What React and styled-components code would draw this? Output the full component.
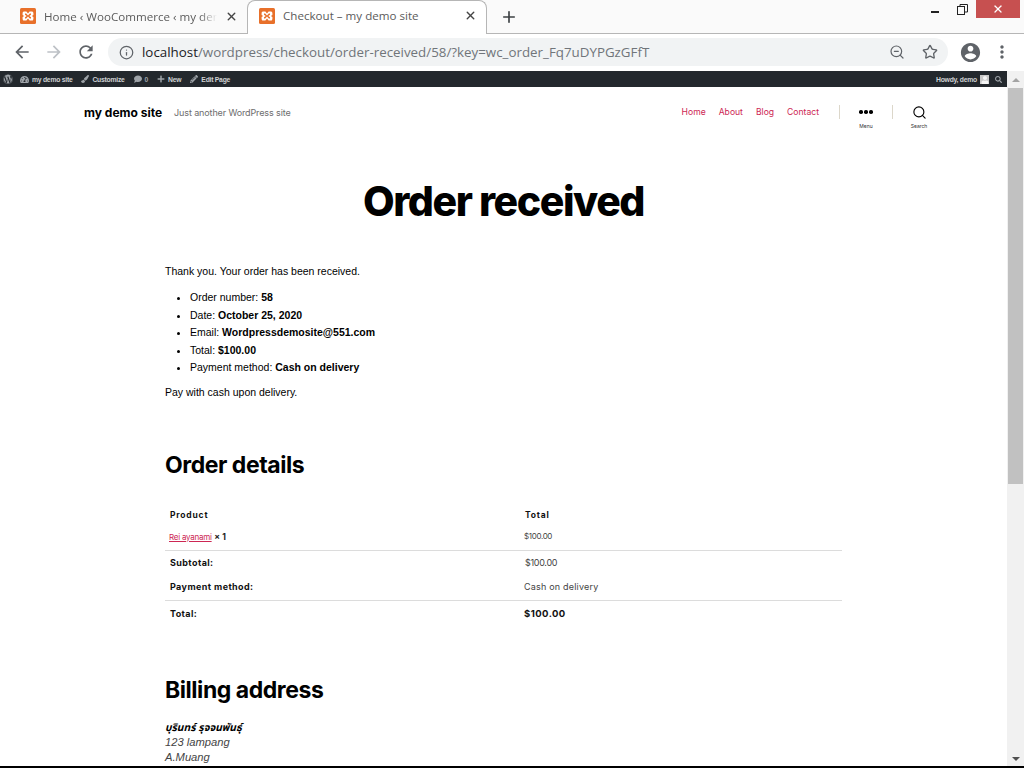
import React from "react";
import styled, { createGlobalStyle } from "styled-components";
import { Info, ZoomOut, Star, X, Plus, Search } from "lucide-react";
import { FaWordpress, FaTachometerAlt, FaPaintBrush, FaComment, FaPlus, FaPencilAlt, FaSearch, FaUser } from "react-icons/fa";

const Global = createGlobalStyle`
  html, body { margin: 0; padding: 0; height: 768px; overflow: hidden; background: #fff; }
  #root { height: 768px; }
  * { box-sizing: border-box; }
`;

const Shell = styled.div`
  width: 1024px; height: 768px; display: flex; flex-direction: column; overflow: hidden;
  border-bottom: 2px solid #000;
  font-family: "Liberation Sans", Arial, sans-serif;
`;
const TabStrip = styled.div`
  height: 34px; flex: none; display: flex; align-items: flex-end; background: #fafafa;
  border-bottom: 1px solid #b6b6b6; padding-left: 8px;
`;
const Tab = styled.div`
  width: ${p => p.$w}px; height: 34px; display: flex; align-items: center; gap: 8px;
  padding: 0 9px ${p => (p.$active ? 4 : 0)}px ${p => (p.$active ? 11 : 12)}px;
  margin-bottom: ${p => (p.$active ? -1 : 0)}px;
  background: ${p => (p.$active ? "#fff" : "transparent")};
  ${p => p.$active && "border: 1px solid #b6b6b6; border-bottom: none; border-radius: 8px 8px 0 0;"}
  font-family: "Open Sans", "Noto Sans", sans-serif; font-size: 11.6px; color: #5b5b5b;
`;
const TabTitle = styled.span`
  flex: 1; min-width: 0; overflow: hidden; white-space: nowrap;
  ${p => p.$fade && "-webkit-mask-image: linear-gradient(90deg,#000 90%,transparent);"}
`;
const NewTab = styled.div`
  width: 44px; height: 33px; display: flex; align-items: center; justify-content: center; color: #3c4043;
`;
const WindowControls = styled.div`
  margin-left: auto; align-self: flex-start; display: flex; align-items: flex-start; padding-right: 4px;
`;
const WinBtn = styled.div`
  width: ${p => p.$w}px; height: 18px; padding-right: ${p => p.$pr || 0}px; display: flex; align-items: center; justify-content: center;
  background: ${p => p.$bg || "transparent"}; color: ${p => p.$c || "#222"};
`;
const Toolbar = styled.div`
  height: 37px; flex: none; display: flex; align-items: flex-start; background: #fff; padding: 4px 0 0 6px;
`;
const NavIcon = styled.div`
  width: ${p => p.$w || 32}px; height: 28px; margin-left: ${p => p.$ml || 0}px; display: flex; align-items: center; justify-content: center;
  color: ${p => p.$c || "#5f6368"};
`;
const Omnibox = styled.div`
  width: 840px; height: 28px; margin-left: 6px; border-radius: 14px; background: #f1f3f4; display: flex; align-items: center;
  padding: 0 1px 0 11px; gap: 8px; color: #5f6368;
`;
const Url = styled.div`
  flex: 1; font-family: "Open Sans", "Noto Sans", sans-serif; font-size: 13.35px; color: #70757a; white-space: nowrap;
`;
const UrlHost = styled.span` color: #202124; `;
const Body = styled.div` flex: 1; min-height: 0; display: flex; `;
const Column = styled.div` width: 1007px; display: flex; flex-direction: column; overflow: hidden; background: #fff; `;
const AdminBar = styled.div`
  height: 16px; flex: none; background: #23282d; display: flex; align-items: center; padding: 0 5px 0 3px;
  color: #cfd1d3; font-size: 6.8px; letter-spacing: -.25px; font-weight: 700;
`;
const AdminItem = styled.div`
  display: flex; align-items: center; gap: 3px; margin-right: ${p => p.$mr ?? 9}px; white-space: nowrap;
  svg { color: #9ea3a8; }
`;
const Avatar = styled.div`
  width: 9px; height: 9px; background: #c8c8c8; display: flex; align-items: flex-end; justify-content: center; overflow: hidden;
`;
const Spacer = styled.div` flex: 1; `;
const CommentCount = styled.span` color: #9ea3a8; `;
const Scrollbar = styled.div`
  width: 17px; background: #f1f1f1; display: flex; flex-direction: column; align-items: center;
`;
const ScrollArrow = styled.div`
  width: 0; height: 0; margin: 7px 0 6px; border-left: 4px solid transparent; border-right: 4px solid transparent; border-bottom: 4px solid #a3a3a3;
`;
const Thumb = styled.div` width: 15px; height: 396px; background: #c1c1c1; `;
const ArrowDown = styled(ScrollArrow)` margin: auto 0 5px; border-bottom: none; border-top: 4px solid #505050; `;
const SiteHeader = styled.header`
  height: 50px; flex: none; display: flex; align-items: center; padding: 0 62px 0 84px; font-family: Inter, sans-serif;
`;
const SiteTitle = styled.div` font-size: 12px; font-weight: 700; color: #000; margin-right: 12px; `;
const Tagline = styled.div` font-size: 9px; color: #6d6d6d; letter-spacing: -.12px; `;
const NavList = styled.nav` margin-left: auto; display: flex; gap: 13px; font-size: 8.6px; color: #cd2653; margin-top: -1px; `;
const Divider = styled.div` width: 1px; height: 14px; background: #dcd7ca; margin-top: -1px; margin-left: ${p => p.$ml}px; `;
const HeaderToggle = styled.div`
  width: ${p => p.$w}px; display: flex; flex-direction: column; align-items: center; gap: 5px; padding-top: 11px;
  font-size: 5px; color: #333;
`;
const ToggleIcon = styled.div` height: 12px; display: flex; align-items: center; color: #000; `;
const Dots = styled.div`
  display: flex; gap: 1.5px;
  i { width: 3.5px; height: 3.5px; border-radius: 50%; background: #000; display: block; }
`;
const H1 = styled.h1`
  margin: 42px 0 0; height: 44px; flex: none; text-align: center; font-family: Inter, sans-serif; font-weight: 800; font-size: 41px;
  line-height: 44px; letter-spacing: -1.45px; color: #000;
`;
const Main = styled.main` margin: 40px 0 0 165px; width: 677px; `;
const Para = styled.p` margin: 0; font-size: 10.5px; line-height: 16px; color: #000; `;
const Overview = styled.ul` margin: 10px 0 7px; padding: 0 0 0 25px; font-size: 10.5px; line-height: 17.5px; color: #000; `;
const H2 = styled.h2`
  margin: ${p => p.$mt}px 0 0; font-family: Inter, sans-serif; font-weight: 700; font-size: 23px; line-height: 28px; letter-spacing: -.45px; color: #000;
`;
const Table = styled.table`
  width: 677px; margin-top: 25px; border-collapse: collapse; table-layout: fixed; font-family: Inter, sans-serif; font-size: 9px; color: #333;
`;
const Row = styled.tr`
  height: ${p => p.$h}px; ${p => p.$line && "border-bottom: 1px solid #dcdcdc;"}
`;
const HeadCell = styled.th`
  text-align: left; padding: 0 0 0 ${p => p.$pl}px; font-weight: 700; letter-spacing: .8px; color: #111; font-size: 8.5px; width: ${p => p.$w || "auto"};
`;
const Cell = styled.td`
  padding: 0 0 ${p => p.$pb || 0}px ${p => p.$pl ?? 4}px; letter-spacing: ${p => p.$ls ?? .2}px; font-size: ${p => p.$fs || 9}px; font-weight: ${p => p.$b ? 700 : 400}; color: ${p => p.$c || "#444"};
`;
const ProductLink = styled.a` color: #cd2653; text-decoration: underline; font-size: 8px; letter-spacing: -.25px; `;
const Qty = styled.strong` color: #222; font-size: 8.5px; letter-spacing: 0; `;
const Address = styled.address`
  margin-top: 16px; font-size: 11.2px; line-height: 15px; font-style: italic; color: #444;
`;
const Name = styled.div` color: #000; font-size: 10.3px; font-weight: 700; font-family: "Liberation Sans", "Noto Sans Thai", "Noto Sans", "DejaVu Sans", sans-serif; `;

const Xampp = () => (
  <svg width="16" height="16" viewBox="0 0 16 16" style={{ flex: "none" }}>
    <rect width="16" height="16" rx="1.5" fill="#e8702a" />
    <path d="M4 3.5h2.4L8 5.4l1.6-1.9H12c1 0 1.4 1 1.4 1.8V7l-1.5 1 1.5 1v1.7c0 .8-.4 1.8-1.4 1.8H9.6L8 10.6l-1.6 1.9H4c-1 0-1.4-1-1.4-1.8V9l1.5-1-1.5-1V5.3c0-.8.4-1.8 1.4-1.8z" fill="#fff" />
    <path d="M5 5.5h1.2L8 7.4l1.8-1.9H11v1.2L9.3 8 11 9.3v1.2H9.8L8 8.6l-1.8 1.9H5V9.3L6.7 8 5 6.7z" fill="#e8702a" />
  </svg>
);
const Mat = ({ d, size = 20 }) => (
  <svg width={size} height={size} viewBox="0 0 24 24" fill="currentColor"><path d={d} /></svg>
);
const BACK = "M20 11H7.83l5.59-5.59L12 4l-8 8 8 8 1.41-1.41L7.83 13H20v-2z";
const FWD = "M12 4l-1.41 1.41L16.17 11H4v2h12.17l-5.58 5.59L12 20l8-8z";
const RELOAD = "M17.65 6.35C16.2 4.9 14.21 4 12 4c-4.42 0-7.99 3.58-7.99 8s3.57 8 7.99 8c3.73 0 6.84-2.55 7.73-6h-2.08c-.82 2.33-3.04 4-5.65 4-3.31 0-6-2.69-6-6s2.69-6 6-6c1.66 0 3.14.69 4.22 1.78L13 11h7V4l-2.35 2.35z";
const ACCOUNT = "M12 2C6.48 2 2 6.48 2 12s4.48 10 10 10 10-4.48 10-10S17.52 2 12 2zm0 3c1.66 0 3 1.34 3 3s-1.34 3-3 3-3-1.34-3-3 1.34-3 3-3zm0 14.2c-2.5 0-4.71-1.28-6-3.22.03-1.99 4-3.08 6-3.08 1.99 0 5.97 1.09 6 3.08-1.29 1.94-3.5 3.22-6 3.22z";
const KEBAB = "M12 8c1.1 0 2-.9 2-2s-.9-2-2-2-2 .9-2 2 .9 2 2 2zm0 2c-1.1 0-2 .9-2 2s.9 2 2 2 2-.9 2-2-.9-2-2-2zm0 6c-1.1 0-2 .9-2 2s.9 2 2 2 2-.9 2-2-.9-2-2-2z";

export default function App() {
  return (
    <Shell>
      <Global />
      <TabStrip>
        <Tab $w={239}>
          <Xampp />
          <TabTitle $fade>Home ‹ WooCommerce ‹ my demo site</TabTitle>
          <X size={13} strokeWidth={2.6} color="#444" />
        </Tab>
        <Tab $w={240} $active>
          <Xampp />
          <TabTitle>Checkout – my demo site</TabTitle>
          <X size={13} strokeWidth={2.6} color="#444" />
        </Tab>
        <NewTab><Plus size={18} strokeWidth={2.2} /></NewTab>
        <WindowControls>
          <WinBtn $w={32} $pr={8}><svg width="10" height="10" viewBox="0 0 10 10"><rect x="1" y="7" width="8" height="2" fill="#222" /></svg></WinBtn>
          <WinBtn $w={14}><svg width="11" height="11" viewBox="0 0 11 11" fill="none" stroke="#222"><rect x=".5" y="2.5" width="7" height="8" /><path d="M3 2.5V.5h7.5v7.5H7.5" /></svg></WinBtn>
          <WinBtn $w={7} />
          <WinBtn $w={44} $bg="#c75050" $c="#fff"><X size={12} strokeWidth={2.6} /></WinBtn>
        </WindowControls>
      </TabStrip>
      <Toolbar>
        <NavIcon><Mat d={BACK} /></NavIcon>
        <NavIcon $c="#bdc1c6"><Mat d={FWD} /></NavIcon>
        <NavIcon><Mat d={RELOAD} /></NavIcon>
        <Omnibox>
          <Info size={15} strokeWidth={2} />
          <Url><UrlHost>localhost</UrlHost>/wordpress/checkout/order-received/58/?key=wc_order_Fq7uDYPGzGFfT</Url>
          <ZoomOut size={16} strokeWidth={1.8} />
          <NavIcon $w={34}><Star size={16} strokeWidth={2} /></NavIcon>
        </Omnibox>
        <NavIcon $ml={6}><Mat d={ACCOUNT} size={23} /></NavIcon>
        <NavIcon><Mat d={KEBAB} size={20} /></NavIcon>
      </Toolbar>
      <Body>
        <Column>
          <AdminBar>
            <AdminItem $mr={7}><FaWordpress size={10} /></AdminItem>
            <AdminItem><FaTachometerAlt size={9} />my demo site</AdminItem>
            <AdminItem><FaPaintBrush size={8} />Customize</AdminItem>
            <AdminItem><FaComment size={8} /><CommentCount>0</CommentCount></AdminItem>
            <AdminItem><FaPlus size={8} />New</AdminItem>
            <AdminItem><FaPencilAlt size={8} />Edit Page</AdminItem>
            <Spacer />
            <AdminItem $mr={6}>Howdy, demo <Avatar><FaUser size={8} color="#f4f4f4" /></Avatar></AdminItem>
            <AdminItem $mr={0}><FaSearch size={7} /></AdminItem>
          </AdminBar>
          <SiteHeader>
            <SiteTitle>my demo site</SiteTitle>
            <Tagline>Just another WordPress site</Tagline>
            <NavList><span>Home</span><span>About</span><span>Blog</span><span>Contact</span></NavList>
            <Divider $ml={20} />
            <HeaderToggle $w={52}><ToggleIcon><Dots><i /><i /><i /></Dots></ToggleIcon>Menu</HeaderToggle>
            <Divider $ml={0} />
            <HeaderToggle $w={52}><ToggleIcon><Search size={15} strokeWidth={1.8} /></ToggleIcon>Search</HeaderToggle>
          </SiteHeader>
          <H1>Order received</H1>
          <Main>
            <Para>Thank you. Your order has been received.</Para>
            <Overview>
              <li>Order number: <strong>58</strong></li>
              <li>Date: <strong>October 25, 2020</strong></li>
              <li>Email: <strong>Wordpressdemosite@551.com</strong></li>
              <li>Total: <strong>$100.00</strong></li>
              <li>Payment method: <strong>Cash on delivery</strong></li>
            </Overview>
            <Para>Pay with cash upon delivery.</Para>
            <H2 $mt={51}>Order details</H2>
            <Table>
              <thead>
                <Row $h={22}><HeadCell $w="359px" $pl={5}>Product</HeadCell><HeadCell $pl={1}>Total</HeadCell></Row>
              </thead>
              <tbody>
                <Row $h={25} $line><Cell $pb={3}><ProductLink>Rei ayanami</ProductLink> <Qty>× 1</Qty></Cell><Cell $pb={3} $pl={0} $ls={-.35} $fs={8}>$100.00</Cell></Row>
                <Row $h={25}><Cell $pb={2} $pl={5} $b $ls={.4} $c="#111">Subtotal:</Cell><Cell $pb={2} $pl={1} $ls={-.3}>$100.00</Cell></Row>
                <Row $h={25} $line><Cell $pb={2} $pl={5} $b $ls={.4} $c="#111">Payment method:</Cell><Cell $pb={2} $pl={0}>Cash on delivery</Cell></Row>
                <Row $h={25}><Cell $pl={5} $b $ls={.4} $c="#111">Total:</Cell><Cell $pl={0} $b $fs={9.5} $ls={.45} $c="#111">$100.00</Cell></Row>
              </tbody>
            </Table>
            <H2 $mt={50}>Billing address</H2>
            <Address>
              <Name>บุรินทร์ รุจจนพันธุ์</Name>
              123 lampang<br />
              A.Muang
            </Address>
          </Main>
        </Column>
        <Scrollbar>
          <ScrollArrow />
          <Thumb />
          <ArrowDown />
        </Scrollbar>
      </Body>
    </Shell>
  );
}
